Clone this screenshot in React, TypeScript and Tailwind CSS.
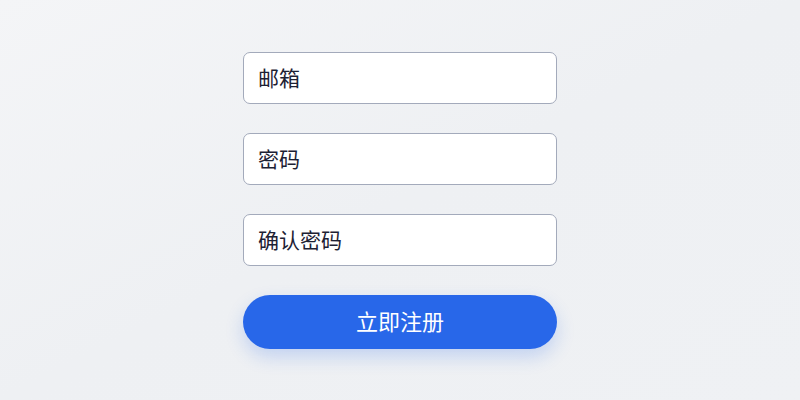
import React from "react";

export default function App() {
  const fields = ["邮箱", "密码", "确认密码"];
  return (
    <div
      className="w-[800px] h-[400px] bg-gradient-to-br from-[#f4f5f7] via-[#eef0f3] to-[#eff1f4] flex flex-col items-center pt-[52px]"
      style={{ fontFamily: '"Noto Sans CJK SC", "Noto Sans", sans-serif' }}
    >
      <div className="w-[314px] flex flex-col gap-[29px]">
        {fields.map((f) => (
          <div
            key={f}
            className="h-[52px] bg-white border border-[#a3aabb] rounded-[7px] flex items-center pl-[14px] text-[21px] text-[#1d2133]"
          >
            {f}
          </div>
        ))}
        <button className="h-[54px] rounded-full bg-[#2867e9] text-white text-[22px] flex items-center justify-center pb-[4px] shadow-[0_8px_18px_rgba(40,103,233,0.22)]">
          立即注册
        </button>
      </div>
    </div>
  );
}
